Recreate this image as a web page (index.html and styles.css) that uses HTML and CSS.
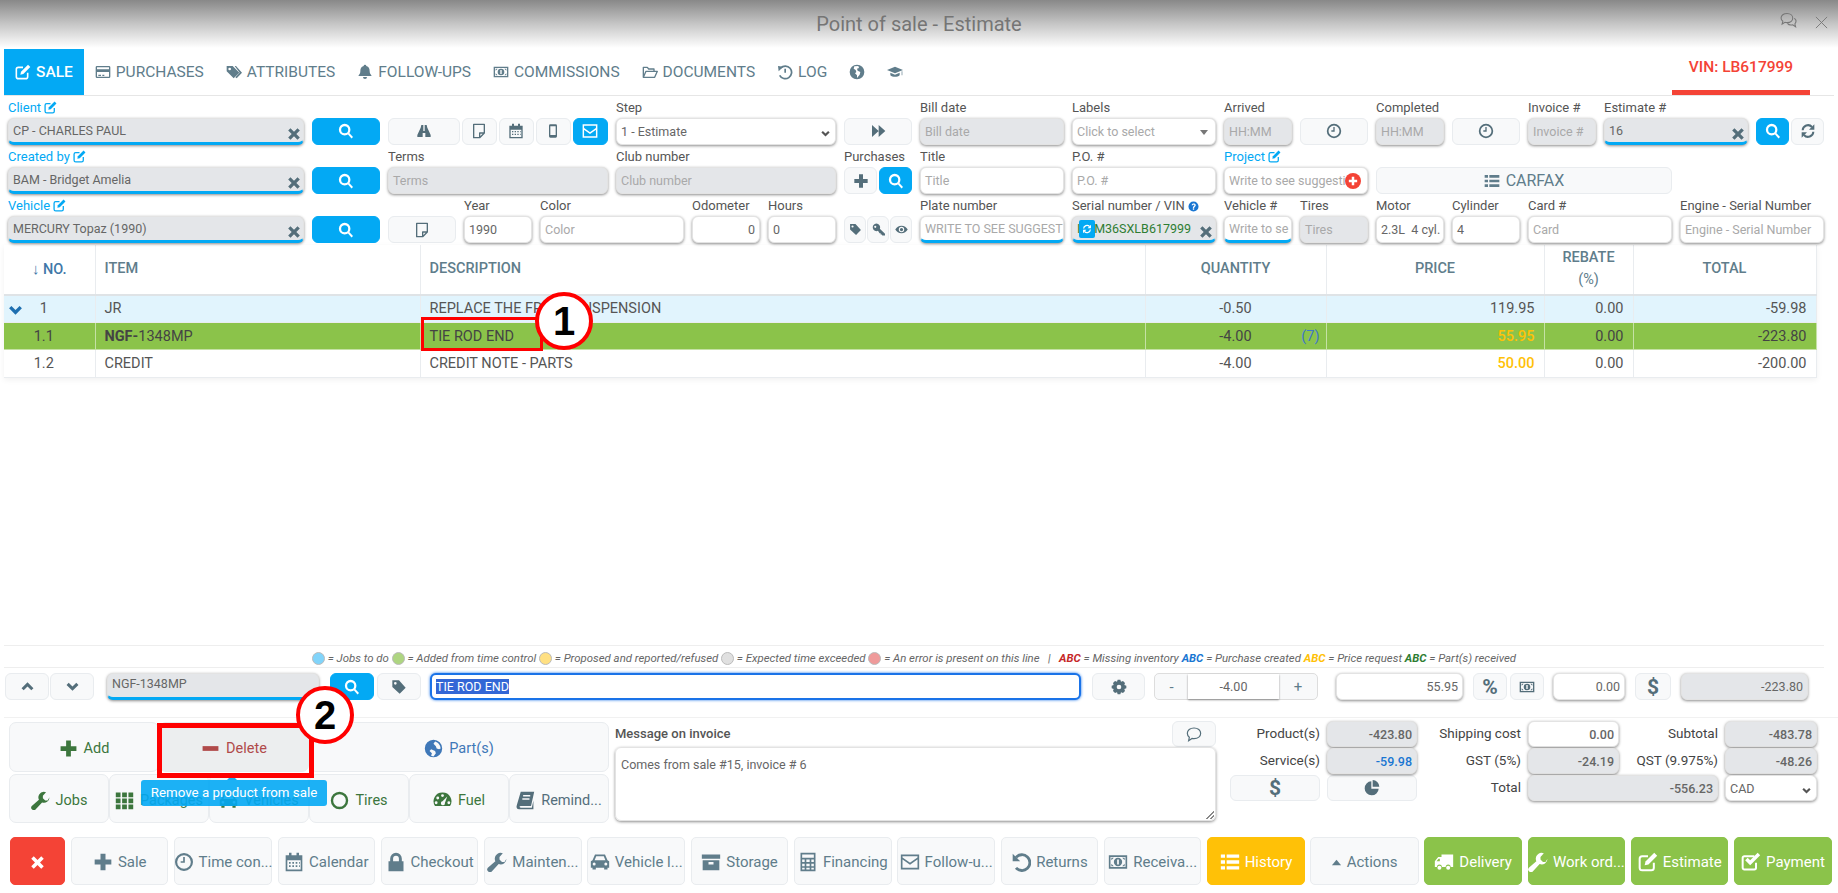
FILE: index.html
```html
<!DOCTYPE html>
<html lang="en">
<head>
  <meta charset="UTF-8" />
  <meta name="viewport" content="width=device-width, initial-scale=1.0" />
  <title>Point of sale - Estimate</title>
  <link rel="stylesheet" href="styles.css">
</head>
<body>
  <!-- icon sprite -->
  <svg class="sprite" xmlns="http://www.w3.org/2000/svg">
    <symbol id="i-edit" viewBox="0 0 24 24"><path d="M19 13v6a3 3 0 0 1-3 3H5a3 3 0 0 1-3-3V8a3 3 0 0 1 3-3h7" fill="none" stroke="currentColor" stroke-width="2.4"/><path d="M8 16l1-4.500L19.500 1 23 4.500 12.500 15z"/></symbol>
    <symbol id="i-card" viewBox="0 0 24 24"><path d="M3 3h18a2 2 0 0 1 2 2v14a2 2 0 0 1-2 2H3a2 2 0 0 1-2-2V5a2 2 0 0 1 2-2zm0 2v3h18V5zm0 7v7h18v-7zm2 4h4v2H5zm6 0h3v2h-3z" fill-rule="evenodd"/></symbol>
    <symbol id="i-tags" viewBox="0 0 24 24"><path d="M1 3h9l10 10-8.500 8.500L1 11zm4.500 2.500a2 2 0 1 0 0 4 2 2 0 0 0 0-4z" fill-rule="evenodd"/><path d="M13 3h2l9 10-8 8.500-2-1.500 6.500-7z"/></symbol>
    <symbol id="i-bell" viewBox="0 0 24 24"><path d="M12 1a2 2 0 0 1 2 2c4 1 5 4 5 8 0 4 2 5 3 7H2c1-2 3-3 3-7 0-4 1-7 5-8a2 2 0 0 1 2-2zM9 19.500h6a3 3 0 0 1-6 0z"/></symbol>
    <symbol id="i-money" viewBox="0 0 24 24"><path d="M1 4h22v16H1zm2 2v12h18V6zm9 1a5 5 0 1 1 0 10 5 5 0 0 1 0-10zm-8 0h3L4 10zm16 0v3l-3-3zM4 14l3 3H4zm16 3h-3l3-3z" fill-rule="evenodd"/><path d="M11 9h2v6h-2z" fill="#fff"/></symbol>
    <symbol id="i-folder" viewBox="0 0 24 24"><path d="M2 20V5h6l2 2.500h8V11M2 20l4-9h17l-4 9z" fill="none" stroke="currentColor" stroke-width="2" stroke-linejoin="round"/></symbol>
    <symbol id="i-history" viewBox="0 0 24 24"><path d="M5.500 6A9.500 9.500 0 1 1 4 17" fill="none" stroke="currentColor" stroke-width="2.600"/><path d="M1.500 3l8 1-7 7zM11 7h2.500v6H11z"/></symbol>
    <symbol id="i-globe" viewBox="0 0 24 24"><path d="M12 1a11 11 0 1 1 0 22 11 11 0 0 1 0-22zM8 3.500L7 7l3 2 1 3-2 2 3 3v4l4-5 1-4-4-2-1-3 3-1-1-3z" fill-rule="evenodd"/></symbol>
    <symbol id="i-cap" viewBox="0 0 24 24"><path d="M12 4L0 9l12 5 12-5zM5 13v4c3 3 11 3 14 0v-4l-7 3zM22 11v6h1v-6z"/></symbol>
    <symbol id="i-search" viewBox="0 0 24 24"><circle cx="10" cy="10" r="7" fill="none" stroke="currentColor" stroke-width="3.400"/><path d="M14.500 16.500l2-2 6 6.500-2.200 2.200z"/></symbol>
    <symbol id="i-binoculars" viewBox="0 0 24 24"><path d="M8 3h3v9h2V3h3l1 4 5 11v3H14v-6h-4v6H2v-3L7 7z"/></symbol>
    <symbol id="i-note" viewBox="0 0 24 24"><path d="M4 2h16v13l-7 7H4zM13 22v-7h7" fill="none" stroke="currentColor" stroke-width="2" stroke-linejoin="round"/></symbol>
    <symbol id="i-calendar" viewBox="0 0 24 24"><path d="M2 4h4V1h3v3h6V1h3v3h4v19H2zm2 6v11h16V10zm2 2h2v2H6zm4 0h2v2h-2zm4 0h2v2h-2zm4 0h1v2h-1zM6 16h2v2H6zm4 0h2v2h-2zm4 0h2v2h-2zm4 0h1v2h-1z" fill-rule="evenodd"/></symbol>
    <symbol id="i-mobile" viewBox="0 0 24 24"><path d="M8 2h8a2 2 0 0 1 2 2v16a2 2 0 0 1-2 2H8a2 2 0 0 1-2-2V4a2 2 0 0 1 2-2zm0 3v13h8V5z" fill-rule="evenodd"/></symbol>
    <symbol id="i-lock" viewBox="0 0 24 24"><path d="M12 1a7 7 0 0 1 7 7v3h2v12H3V11h2V8a7 7 0 0 1 7-7zm0 3.500A3.500 3.500 0 0 0 8.500 8v3h7V8A3.500 3.500 0 0 0 12 4.500z" fill-rule="evenodd"/></symbol>
    <symbol id="i-mailcheck" viewBox="0 0 24 24"><path d="M2 3h20v18H2zM2 8l10 7 10-7" fill="none" stroke="currentColor" stroke-width="2.200"/></symbol>
    <symbol id="i-forward" viewBox="0 0 24 24"><path d="M3 3l10 9-10 9zM13 3l10 9-10 9z"/></symbol>
    <symbol id="i-clock" viewBox="0 0 24 24"><circle cx="12" cy="12" r="9.500" fill="none" stroke="currentColor" stroke-width="2.600"/><path d="M11 6h2v7H8v-2h3z"/></symbol>
    <symbol id="i-times" viewBox="0 0 24 24"><path d="M6 2l6 6 6-6 4 4-6 6 6 6-4 4-6-6-6 6-4-4 6-6-6-6z"/></symbol>
    <symbol id="i-refresh" viewBox="0 0 24 24"><path d="M4 11a8 8 0 0 1 14-5M20 13a8 8 0 0 1-14 5" fill="none" stroke="currentColor" stroke-width="3"/><path d="M21.500 2v8h-8zM2.500 22v-8h8z"/></symbol>
    <symbol id="i-plus" viewBox="0 0 24 24"><path d="M9 2h6v7h7v6h-7v7H9v-7H2V9h7z"/></symbol>
    <symbol id="i-minus" viewBox="0 0 24 24"><path d="M2 9h20v6H2z"/></symbol>
    <symbol id="i-tag" viewBox="0 0 24 24"><path d="M2 2h10l10 11-9 9L2 12zm4.500 2.500a2 2 0 1 0 0 4 2 2 0 0 0 0-4z" fill-rule="evenodd"/></symbol>
    <symbol id="i-key" viewBox="0 0 24 24"><path d="M8 1a7 7 0 0 1 6.500 9.500L24 20v3h-5l-1-2h-2v-2h-2l-3-4.500A7 7 0 1 1 8 1zM6 5a2 2 0 1 0 0 4 2 2 0 0 0 0-4z" fill-rule="evenodd"/></symbol>
    <symbol id="i-eye" viewBox="0 0 24 24"><path d="M12 5c5 0 9 3 11.500 7-2.500 4-6.500 7-11.500 7S3 16 .5 12C3 8 7 5 12 5zm0 2a5 5 0 1 0 0 10 5 5 0 0 0 0-10zm0 2a3 3 0 1 1 0 6 3 3 0 0 1 0-6z" fill-rule="evenodd"/></symbol>
    <symbol id="i-list" viewBox="0 0 24 24"><path d="M1 3h5v4H1zm7 0h15v4H8zM1 10h5v4H1zm7 0h15v4H8zM1 17h5v4H1zm7 0h15v4H8z"/></symbol>
    <symbol id="i-question" viewBox="0 0 24 24"><path d="M12 1a11 11 0 1 1 0 22 11 11 0 0 1 0-22zm-1.500 15v3h3v-3zM8 9h3c0-2 3-2 3 0 0 1.500-3.500 2-3.500 6h3c0-2.500 3.500-3 3.500-6 0-5-9-5-9 0z" fill-rule="evenodd"/></symbol>
    <symbol id="i-down" viewBox="0 0 24 24"><path d="M1 9l4-4 7 7 7-7 4 4-11 11z"/></symbol>
    <symbol id="i-up" viewBox="0 0 24 24"><path d="M1 15l4 4 7-7 7 7 4-4L12 4z"/></symbol>
    <symbol id="i-gear" viewBox="0 0 24 24"><path d="M10 1h4l1 3 3-1 3 3-1 3 3 1v4l-3 1 1 3-3 3-3-1-1 3h-4l-1-3-3 1-3-3 1-3-3-1v-4l3-1-1-3 3-3 3 1zm2 7.500a3.500 3.500 0 1 0 0 7 3.500 3.500 0 0 0 0-7z" fill-rule="evenodd"/></symbol>
    <symbol id="i-globe2" viewBox="0 0 24 24"><path d="M12 1a11 11 0 1 1 0 22 11 11 0 0 1 0-22zm2 2l-2 3 3 3 1 3 3 1 2-1c0-4-3-8-7-9zM9 13l-2 2 3 3-1 3 3 1 3-4-1-3z" fill-rule="evenodd"/></symbol>
    <symbol id="i-wrench" viewBox="0 0 24 24"><path d="M16 1a7 7 0 0 1 3 .6L15 6v3l3 3 3 0 2.400-4A7 7 0 0 1 14 14.500L6 23a3 3 0 0 1-5-4l9-8A7 7 0 0 1 16 1z"/></symbol>
    <symbol id="i-th" viewBox="0 0 24 24"><path d="M1 2h6v6H1zm8 0h6v6H9zm8 0h6v6h-6zM1 9.500h6v6H1zm8 0h6v6H9zm8 0h6v6h-6zM1 17h6v6H1zm8 0h6v6H9zm8 0h6v6h-6z"/></symbol>
    <symbol id="i-car" viewBox="0 0 24 24"><path d="M6 3h12l3 7 2 1v8h-2v2h-4v-2H7v2H3v-2H1v-8l2-1zm1.500 2L5.500 10h13L16.500 5zM5 12.500a1.800 1.800 0 1 0 0 3.600 1.800 1.800 0 0 0 0-3.600zm14 0a1.800 1.800 0 1 0 0 3.600 1.800 1.800 0 0 0 0-3.600z" fill-rule="evenodd"/></symbol>
    <symbol id="i-ring" viewBox="0 0 24 24"><circle cx="12" cy="12" r="9.500" fill="none" stroke="currentColor" stroke-width="3"/></symbol>
    <symbol id="i-gauge" viewBox="0 0 24 24"><path d="M12 2a11 11 0 0 1 9.500 17H2.500A11 11 0 0 1 12 2zm0 2a1.800 1.800 0 1 0 0 3.600A1.800 1.800 0 0 0 12 4zM6 7a1.800 1.800 0 1 0 0 3.600A1.800 1.800 0 0 0 6 7zm-2 6a1.800 1.800 0 1 0 0 3.600A1.800 1.800 0 0 0 4 13zm16 0a1.800 1.800 0 1 0 0 3.600 1.800 1.800 0 0 0 0-3.600zM18 7l-6 6a2.500 2.500 0 1 0 3 2z" fill-rule="evenodd"/></symbol>
    <symbol id="i-book" viewBox="0 0 24 24"><path d="M6 1h17l-4 18H6c-2 0-2 2 0 2h14l2-9v11H4c-3 0-4-2-3-5zm3 4v2h9V5zm-1 4v2h9V9z" fill-rule="evenodd"/></symbol>
    <symbol id="i-archive" viewBox="0 0 24 24"><path d="M1 3h22v5H1zM2 10h20v12H2zm7 2v3h6v-3z" fill-rule="evenodd"/></symbol>
    <symbol id="i-calc" viewBox="0 0 24 24"><path d="M3 1h18v22H3zm2 2v4h14V3zm0 6v3h3V9zm5 0v3h4V9zm6 0v3h3V9zM5 14v3h3v-3zm5 0v3h4v-3zm6 0v3h3v-3zM5 19v2h3v-2zm5 0v2h4v-2zm6 0v2h3v-2z" fill-rule="evenodd"/></symbol>
    <symbol id="i-mail" viewBox="0 0 24 24"><path d="M2 4h20v16H2zM2 7l10 7 10-7" fill="none" stroke="currentColor" stroke-width="2"/></symbol>
    <symbol id="i-undo" viewBox="0 0 24 24"><path d="M6 6.500A9.500 9.500 0 1 1 6 19" fill="none" stroke="currentColor" stroke-width="3.400"/><path d="M2 2v9h9z"/></symbol>
    <symbol id="i-caret" viewBox="0 0 24 24"><path d="M12 6l10 12H2z"/></symbol>
    <symbol id="i-truck" viewBox="0 0 24 24"><path d="M9 3h14v15h-3a3 3 0 0 0-6 0H9.500a3 3 0 0 0-6 0H1v-7l4-5h4zM7 8H5.500L3 11h4z" fill-rule="evenodd"/><circle cx="6.500" cy="19" r="2.400"/><circle cx="17" cy="19" r="2.400"/></symbol>
    <symbol id="i-check" viewBox="0 0 24 24"><path d="M18 13v6a2 2 0 0 1-2 2H4a2 2 0 0 1-2-2V7a2 2 0 0 1 2-2h12" fill="none" stroke="currentColor" stroke-width="2.400"/><path d="M5 10l3-3 3 3 9-9 3 3-12 12z"/></symbol>
    <symbol id="i-comment" viewBox="0 0 24 24"><path d="M12 3c6 0 10 3.500 10 8s-4 8-10 8c-1 0-2 0-3-.4L4 22l1-5c-2-1.500-3-3.500-3-6 0-4.500 4-8 10-8z" fill="none" stroke="currentColor" stroke-width="1.800"/></symbol>
    <symbol id="i-pie" viewBox="0 0 24 24"><path d="M11 2v11h11A10.500 10.500 0 1 1 11 2zM13 0a10.500 10.500 0 0 1 10 10H13z"/></symbol>
    <symbol id="i-comments" viewBox="0 0 24 24"><path d="M10 2c5 0 8 3 8 6.500S15 15 10 15c-1 0-2 0-3-.4L3 17l1-4c-1.500-1-2.500-2.700-2.500-4.500C1.500 5 5 2 10 2z" fill="none" stroke="currentColor" stroke-width="1.500"/><path d="M20 9c2 1 3 3 2.500 5-.2 1.200-1 2-1.500 2.800l1 4-4-2.800c-3 .8-6 0-7.500-2" fill="none" stroke="currentColor" stroke-width="1.500"/></symbol>
    <symbol id="i-close" viewBox="0 0 24 24"><path d="M3 3l18 18M21 3L3 21" fill="none" stroke="currentColor" stroke-width="1.500"/></symbol>
  </svg>

  <div class="page">
    <header class="topbar">
      <span class="topbar-title">Point of sale - Estimate</span>
      <div class="topbar-icons">
        <svg class="ico-chat"><use href="#i-comments"/></svg>
        <svg class="ico-close"><use href="#i-close"/></svg>
      </div>
    </header>

    <nav class="tabs">
      <a class="tab active"><svg class="ico"><use href="#i-edit"/></svg>SALE</a>
      <a class="tab"><svg class="ico"><use href="#i-card"/></svg>PURCHASES</a>
      <a class="tab"><svg class="ico"><use href="#i-tags"/></svg>ATTRIBUTES</a>
      <a class="tab"><svg class="ico"><use href="#i-bell"/></svg>FOLLOW-UPS</a>
      <a class="tab"><svg class="ico"><use href="#i-money"/></svg>COMMISSIONS</a>
      <a class="tab"><svg class="ico"><use href="#i-folder"/></svg>DOCUMENTS</a>
      <a class="tab"><svg class="ico"><use href="#i-history"/></svg>LOG</a>
      <a class="tab"><svg class="ico"><use href="#i-globe"/></svg></a>
      <a class="tab"><svg class="ico"><use href="#i-cap"/></svg></a>
      <a class="tab tab-vin">VIN: LB617999</a>
    </nav>

    <section class="form-grid">
      <!-- row 1 -->
      <div class="cell s4"><label class="link">Client <svg class="ico-sm"><use href="#i-edit"/></svg></label>
        <div class="field off under">CP - CHARLES PAUL<svg class="clear"><use href="#i-times"/></svg></div></div>
      <div class="cell s1"><label></label><button class="btn primary"><svg class="ico"><use href="#i-search"/></svg></button></div>
      <div class="cell s3"><label></label>
        <div class="btn-row">
          <button class="btn w2"><svg class="ico"><use href="#i-binoculars"/></svg></button>
          <button class="btn"><svg class="ico"><use href="#i-note"/></svg></button>
          <button class="btn"><svg class="ico"><use href="#i-calendar"/></svg></button>
          <button class="btn"><svg class="ico"><use href="#i-mobile"/></svg></button>
          <button class="btn primary"><svg class="ico"><use href="#i-mailcheck"/></svg></button>
        </div></div>
      <div class="cell s3"><label>Step</label><div class="field">1 - Estimate<svg class="chev"><use href="#i-down"/></svg></div></div>
      <div class="cell s1"><label></label><button class="btn"><svg class="ico"><use href="#i-forward"/></svg></button></div>
      <div class="cell s2"><label>Bill date</label><div class="field off ph">Bill date</div></div>
      <div class="cell s2"><label>Labels</label><div class="field ph">Click to select<span class="caret-down"></span></div></div>
      <div class="cell s1"><label>Arrived</label><div class="field off ph">HH:MM</div></div>
      <div class="cell s1"><label></label><button class="btn"><svg class="ico"><use href="#i-clock"/></svg></button></div>
      <div class="cell s1"><label>Completed</label><div class="field off ph">HH:MM</div></div>
      <div class="cell s1"><label></label><button class="btn"><svg class="ico"><use href="#i-clock"/></svg></button></div>
      <div class="cell s1"><label>Invoice #</label><div class="field off ph">Invoice #</div></div>
      <div class="cell s2"><label>Estimate #</label><div class="field off under">16<svg class="clear"><use href="#i-times"/></svg></div></div>
      <div class="cell s1"><label></label><div class="btn-row">
          <button class="btn primary"><svg class="ico"><use href="#i-search"/></svg></button>
          <button class="btn"><svg class="ico"><use href="#i-refresh"/></svg></button>
        </div></div>

      <!-- row 2 -->
      <div class="cell s4"><label class="link">Created by <svg class="ico-sm"><use href="#i-edit"/></svg></label>
        <div class="field off under">BAM - Bridget Amelia<svg class="clear"><use href="#i-times"/></svg></div></div>
      <div class="cell s1"><label></label><button class="btn primary"><svg class="ico"><use href="#i-search"/></svg></button></div>
      <div class="cell s3"><label>Terms</label><div class="field off ph">Terms</div></div>
      <div class="cell s3"><label>Club number</label><div class="field off ph">Club number</div></div>
      <div class="cell s1"><label>Purchases</label><div class="btn-row">
          <button class="btn"><svg class="ico"><use href="#i-plus"/></svg></button>
          <button class="btn primary"><svg class="ico"><use href="#i-search"/></svg></button>
        </div></div>
      <div class="cell s2"><label>Title</label><div class="field ph">Title</div></div>
      <div class="cell s2"><label>P.O. #</label><div class="field ph">P.O. #</div></div>
      <div class="cell s2"><label class="link">Project <svg class="ico-sm"><use href="#i-edit"/></svg></label>
        <div class="field ph">Write to see suggesti<span class="add-badge"><svg><use href="#i-plus"/></svg></span></div></div>
      <div class="cell s4"><label></label><button class="btn btn-text"><svg class="ico"><use href="#i-list"/></svg>CARFAX</button></div>
      <div class="cell s2"></div>

      <!-- row 3 -->
      <div class="cell s4"><label class="link">Vehicle <svg class="ico-sm"><use href="#i-edit"/></svg></label>
        <div class="field off under">MERCURY Topaz (1990)<svg class="clear"><use href="#i-times"/></svg></div></div>
      <div class="cell s1"><label></label><button class="btn primary"><svg class="ico"><use href="#i-search"/></svg></button></div>
      <div class="cell s1"><label></label><button class="btn"><svg class="ico"><use href="#i-note"/></svg></button></div>
      <div class="cell s1"><label>Year</label><div class="field">1990</div></div>
      <div class="cell s2"><label>Color</label><div class="field ph">Color</div></div>
      <div class="cell s1"><label>Odometer</label><div class="field right">0</div></div>
      <div class="cell s1"><label>Hours</label><div class="field">0</div></div>
      <div class="cell s1"><label></label><div class="btn-row tight">
          <button class="btn"><svg class="ico-sm"><use href="#i-tag"/></svg></button>
          <button class="btn"><svg class="ico-sm"><use href="#i-key"/></svg></button>
          <button class="btn"><svg class="ico-sm"><use href="#i-eye"/></svg></button>
        </div></div>
      <div class="cell s2"><label>Plate number</label><div class="field ph under">WRITE TO SEE SUGGEST</div></div>
      <div class="cell s2"><label>Serial number / VIN <svg class="ico-sm help"><use href="#i-question"/></svg></label>
        <div class="field off under vin">IL<span class="vin-btn"><svg><use href="#i-refresh"/></svg></span>M36SXLB617999<svg class="clear"><use href="#i-times"/></svg></div></div>
      <div class="cell s1"><label>Vehicle #</label><div class="field ph under">Write to se</div></div>
      <div class="cell s1"><label>Tires</label><div class="field off ph">Tires</div></div>
      <div class="cell s1"><label>Motor</label><div class="field">2.3L&nbsp; 4 cyl.</div></div>
      <div class="cell s1"><label>Cylinder</label><div class="field">4</div></div>
      <div class="cell s2"><label>Card #</label><div class="field ph">Card</div></div>
      <div class="cell s2"><label>Engine - Serial Number</label><div class="field ph">Engine - Serial Number</div></div>
    </section>

    <table class="lines">
      <colgroup>
        <col class="col-no"><col class="col-item"><col class="col-desc"><col class="col-qty"><col class="col-price"><col class="col-rebate"><col class="col-total">
      </colgroup>
      <thead>
        <tr>
          <th class="th-no"><span class="sort">↓</span> NO.</th>
          <th class="left">ITEM</th>
          <th class="left">DESCRIPTION</th>
          <th>QUANTITY</th>
          <th>PRICE</th>
          <th>REBATE<br><span class="th-sub">(%)</span></th>
          <th>TOTAL</th>
        </tr>
      </thead>
      <tbody>
        <tr class="row-blue">
          <td class="no"><svg class="row-chev"><use href="#i-down"/></svg>1</td>
          <td>JR</td>
          <td>REPLACE THE FRONT SUSPENSION</td>
          <td class="qty">-0.50</td>
          <td class="num">119.95</td>
          <td class="num">0.00</td>
          <td class="num">-59.98</td>
        </tr>
        <tr class="row-green">
          <td class="no">1.1</td>
          <td><b>NGF-</b>1348MP</td>
          <td>TIE ROD END</td>
          <td class="qty">-4.00<span class="stock">(7)</span></td>
          <td class="num amber">55.95</td>
          <td class="num">0.00</td>
          <td class="num">-223.80</td>
        </tr>
        <tr>
          <td class="no">1.2</td>
          <td>CREDIT</td>
          <td>CREDIT NOTE - PARTS</td>
          <td class="qty">-4.00</td>
          <td class="num amber">50.00</td>
          <td class="num">0.00</td>
          <td class="num">-200.00</td>
        </tr>
      </tbody>
    </table>

    <div class="spacer"></div>

    <div class="legend">
      <i class="dot d-blue"></i> = Jobs to do <i class="dot d-green"></i> = Added from time control <i class="dot d-yellow"></i> = Proposed and reported/refused <i class="dot d-grey"></i> = Expected time exceeded <i class="dot d-red"></i> = An error is present on this line &nbsp; | &nbsp; <b class="t-red">ABC</b> = Missing inventory <b class="t-blue">ABC</b> = Purchase created <b class="t-yellow">ABC</b> = Price request <b class="t-green">ABC</b> = Part(s) received
    </div>

    <div class="edit-row">
      <button class="btn e-arrow"><svg class="ico"><use href="#i-up"/></svg></button>
      <button class="btn e-arrow"><svg class="ico"><use href="#i-down"/></svg></button>
      <div class="field off under e-item">NGF-1348MP</div>
      <button class="btn primary e-search"><svg class="ico"><use href="#i-search"/></svg></button>
      <button class="btn e-tag"><svg class="ico"><use href="#i-tag"/></svg></button>
      <div class="field e-desc"><span class="selected">TIE ROD END</span></div>
      <button class="btn e-gear"><svg class="ico"><use href="#i-gear"/></svg></button>
      <div class="stepper">
        <span class="step-btn">-</span>
        <span class="step-val">-4.00</span>
        <span class="step-btn plus">+</span>
      </div>
      <div class="field right e-price">55.95</div>
      <button class="btn e-small big-glyph">%</button>
      <button class="btn e-small"><svg class="ico"><use href="#i-money"/></svg></button>
      <div class="field right e-rebate">0.00</div>
      <button class="btn e-small big-glyph">$</button>
      <div class="field off right e-total">-223.80</div>
    </div>

    <div class="lower">
      <div class="actions">
        <button class="btn act s3 green-t"><svg class="ico"><use href="#i-plus"/></svg>Add</button>
        <button class="btn act s3 red-t pressed"><svg class="ico"><use href="#i-minus"/></svg>Delete</button>
        <button class="btn act s6 blue-t"><svg class="ico"><use href="#i-globe2"/></svg>Part(s)</button>
        <button class="btn act s2 green-t"><svg class="ico"><use href="#i-wrench"/></svg>Jobs</button>
        <button class="btn act s2 green-t"><svg class="ico"><use href="#i-th"/></svg>Packages</button>
        <button class="btn act s2 green-t"><svg class="ico"><use href="#i-car"/></svg>Vehicles</button>
        <button class="btn act s2 green-t"><svg class="ico"><use href="#i-ring"/></svg>Tires</button>
        <button class="btn act s2 green-t"><svg class="ico"><use href="#i-gauge"/></svg>Fuel</button>
        <button class="btn act s2"><svg class="ico"><use href="#i-book"/></svg>Remind...</button>
      </div>

      <div class="message">
        <div class="message-head">
          <label>Message on invoice</label>
          <button class="btn msg-btn"><svg class="ico"><use href="#i-comment"/></svg></button>
        </div>
        <div class="message-box">Comes from sale #15, invoice # 6</div>
      </div>

      <div class="totals">
        <label>Product(s)</label><div class="field off right">-423.80</div>
        <label>Shipping cost</label><div class="field right">0.00</div>
        <label>Subtotal</label><div class="field off right">-483.78</div>
        <label>Service(s)</label><div class="field off right val-blue">-59.98</div>
        <label>GST (5%)</label><div class="field off right">-24.19</div>
        <label>QST (9.975%)</label><div class="field off right">-48.26</div>
        <button class="btn big-glyph">$</button><button class="btn"><svg class="ico"><use href="#i-pie"/></svg></button>
        <label>Total</label><div class="field off right total-val">-556.23</div>
        <div class="field currency">CAD<svg class="chev"><use href="#i-down"/></svg></div>
      </div>
    </div>

    <footer class="bottom-bar">
      <button class="btn danger"><svg class="ico-x"><use href="#i-times"/></svg></button>
      <button class="btn bar"><svg><use href="#i-plus"/></svg>Sale</button>
      <button class="btn bar"><svg><use href="#i-clock"/></svg>Time con...</button>
      <button class="btn bar"><svg><use href="#i-calendar"/></svg>Calendar</button>
      <button class="btn bar"><svg><use href="#i-lock"/></svg>Checkout</button>
      <button class="btn bar"><svg><use href="#i-wrench"/></svg>Mainten...</button>
      <button class="btn bar"><svg><use href="#i-car"/></svg>Vehicle l...</button>
      <button class="btn bar"><svg><use href="#i-archive"/></svg>Storage</button>
      <button class="btn bar"><svg><use href="#i-calc"/></svg>Financing</button>
      <button class="btn bar"><svg><use href="#i-mail"/></svg>Follow-u...</button>
      <button class="btn bar"><svg><use href="#i-undo"/></svg>Returns</button>
      <button class="btn bar"><svg><use href="#i-money"/></svg>Receiva...</button>
      <button class="btn bar amber-bg"><svg><use href="#i-list"/></svg>History</button>
      <button class="btn bar wide"><svg class="small"><use href="#i-caret"/></svg>Actions</button>
      <button class="btn bar green-bg"><svg><use href="#i-truck"/></svg>Delivery</button>
      <button class="btn bar green-bg"><svg><use href="#i-wrench"/></svg>Work ord...</button>
      <button class="btn bar green-bg"><svg><use href="#i-edit"/></svg>Estimate</button>
      <button class="btn bar green-bg"><svg><use href="#i-check"/></svg>Payment</button>
    </footer>

    <!-- annotations and tooltip sit over the page -->
    <div class="tooltip">Remove a product from sale</div>
    <div class="mark mark-rect-1"></div>
    <div class="mark mark-circle mark-circle-1">1</div>
    <div class="mark mark-rect-2"></div>
    <div class="mark mark-circle mark-circle-2">2</div>
  </div>
</body>
</html>
```

FILE: styles.css
```css
* { box-sizing: border-box; }
html, body { margin: 0; padding: 0; }
body {
  font-family: Roboto, "Liberation Sans", sans-serif;
  font-size: 13px;
  color: #555;
  background: #fff;
  overflow: hidden;
}
.sprite { display: none; }
svg { fill: currentColor; flex-shrink: 0; }

.page {
  position: relative;
  height: 893px;
  display: flex;
  flex-direction: column;
}

/* top window bar */
.topbar {
  height: 48px;
  flex-shrink: 0;
  display: flex;
  align-items: center;
  justify-content: center;
  background: linear-gradient(#888 0%, #c6c6c6 50%, #fff 100%);
}
.topbar-title { font-size: 20px; color: #757575; }
.topbar-icons {
  position: absolute;
  top: 12px;
  right: 9px;
  display: flex;
  gap: 14px;
  color: #777;
}
.ico-chat { width: 23px; height: 17px; }
.ico-close { width: 15px; height: 15px; margin-top: 3px; }

/* tabs */
.tabs {
  height: 46.500px;
  margin: 1px 4px 0 4px;
  flex-shrink: 0;
  display: flex;
  border-bottom: 1px solid #e6e6e6;
  font-size: 15.500px;
}
.tab {
  display: flex;
  align-items: center;
  gap: 5px;
  padding: 0 11px;
  color: #607d8b;
}
.tab.active { background: #03a9f4; color: #fff; font-weight: 500; }
.tab .ico { width: 16px; height: 16px; }
.tab-vin {
  margin-left: auto;
  margin-right: 24px;
  width: 138px;
  justify-content: center;
  color: #f44336;
  font-weight: 500;
  padding-bottom: 4px;
  border-bottom: 5px solid #f44336;
}

/* header form: 24 columns of 76px */
.form-grid {
  display: grid;
  grid-template-columns: repeat(24, 76px);
  grid-auto-rows: 49.300px;
  margin-left: 4px;
  flex-shrink: 0;
}
.cell {
  padding: 0 4px;
  min-width: 0;
  display: flex;
  flex-direction: column;
  justify-content: flex-end;
}
.s1 { grid-column: span 1; }
.s2 { grid-column: span 2; }
.s3 { grid-column: span 3; }
.s4 { grid-column: span 4; }
.s6 { grid-column: span 6; }
label { display: block; height: 20px; line-height: 20px; font-size: 13px; color: #555; white-space: nowrap; }
label.link { color: #03a9f4; }
.ico-sm { width: 13px; height: 13px; vertical-align: -2px; }
.help { color: #1976d2; width: 11px; height: 11px; }

.field {
  position: relative;
  height: 27px;
  display: flex;
  align-items: center;
  padding: 0 4px;
  background: #fff;
  border: 1px solid #e3e3e3;
  border-radius: 6px;
  box-shadow: 0 1px 3px rgba(0, 0, 0, .45);
  font-size: 12.500px;
  color: #666;
  white-space: nowrap;
  overflow: hidden;
}
.field.off { background: #e4e6e9; }
.field.ph { color: #a9a9a9; }
.field.under { border-bottom: 3px solid #03a9f4; }
.field.right { justify-content: flex-end; }
.clear { position: absolute; right: 2px; top: 8px; width: 14px; height: 14px; color: #546e7a; }
.chev { position: absolute; right: 5px; top: 10px; width: 9px; height: 9px; color: #555; }
.caret-down {
  position: absolute;
  right: 7px;
  top: 11px;
  border: 4px solid transparent;
  border-top: 5px solid #777;
  border-bottom: 0;
}
.add-badge {
  position: absolute;
  right: 6px;
  top: 5px;
  width: 16px;
  height: 16px;
  border-radius: 50%;
  background: #f44336;
  color: #fff;
  display: flex;
  align-items: center;
  justify-content: center;
}
.add-badge svg { width: 10px; height: 10px; }
.vin { color: #2e7d32; }
.vin-btn {
  width: 16px;
  height: 18px;
  margin: 0 -1px 0 -8px;
  background: #03a9f4;
  border-radius: 2px;
  color: #fff;
  display: flex;
  align-items: center;
  justify-content: center;
}
.vin-btn svg { width: 10px; height: 10px; }

.btn {
  height: 27px;
  width: 100%;
  padding: 0;
  display: flex;
  align-items: center;
  justify-content: center;
  gap: 6px;
  background: #f8f9fa;
  border: 1px solid #e9ecef;
  border-radius: 6px;
  color: #546e7a;
  font: inherit;
  white-space: nowrap;
  min-width: 0;
}
.btn.primary { background: #03a9f4; border-color: #03a9f4; color: #fff; }
.ico { width: 16px; height: 16px; }
.btn-row { display: flex; gap: 2px; }
.btn-row .btn { flex: 1 1 0; }
.btn-row .w2 { flex-grow: 2.100; }
.btn-row.tight { gap: 1px; }
.btn-text { font-size: 16px; color: #607d8b; }

/* line table */
.lines {
  width: 1812px;
  margin: 1.500px 0 0 4px;
  table-layout: fixed;
  border-collapse: collapse;
  box-shadow: 0 2px 6px rgba(0, 0, 0, .06);
  flex-shrink: 0;
  font-size: 14.500px;
}
.col-no { width: 91px; }
.col-item { width: 325px; }
.col-desc { width: 725px; }
.col-qty { width: 181px; }
.col-price { width: 218px; }
.col-rebate { width: 89px; }
.col-total { width: 183px; }
.lines th {
  height: 50px;
  font-weight: 500;
  font-size: 14.500px;
  color: #607d8b;
  text-align: center;
  line-height: 22px;
  padding: 0 9px;
  border-right: 1px solid #e9ecef;
  border-bottom: 2px solid #dfe3e6;
}
.lines th.left { text-align: left; }
.th-no { padding-left: 20px; color: #3f78a8 !important; }
.sort { font-weight: 400; font-size: 15px; }
.th-sub { font-weight: 400; }
.lines td {
  height: 27.500px;
  padding: 0 9px;
  border-right: 1px solid #e9ecef;
  border-bottom: 1px solid #e9ecef;
  color: #555;
  white-space: nowrap;
}
.lines td.no { position: relative; text-align: center; padding: 0 30px 0 19px; }
.lines td.qty { position: relative; text-align: center; }
.lines td.num { text-align: right; }
.lines td.amber { color: #ffc107; font-weight: 500; }
.row-chev { position: absolute; left: 3px; top: 7px; width: 17px; height: 14px; color: #1e6fb0; }
.row-blue td { background: #e1f4fd; }
.row-green td { background: #8bc34a; border-color: #c5e1a5; color: #444; }
.stock { position: absolute; right: 6px; color: #3f78c8; }

.spacer { flex: 1; }

.legend {
  height: 23px;
  line-height: 25px;
  margin: 0 14px 0 4px;
  text-align: center;
  font-size: 11.400px;
  font-style: italic;
  color: #666;
  border-top: 1px solid #eee;
  border-bottom: 1px solid #eee;
  white-space: nowrap;
  flex-shrink: 0;
}
.dot { display: inline-block; vertical-align: -3px; width: 13px; height: 13px; border-radius: 50%; border: 1px solid #bbb; }
.d-blue { background: #81d4fa; }
.d-green { background: #aed581; }
.d-yellow { background: #ffe082; }
.d-grey { background: #e0e0e0; }
.d-red { background: #ef9a9a; }
.t-red { color: #c62828; }
.t-blue { color: #1976d2; }
.t-yellow { color: #ffc107; }
.t-green { color: #2e7d32; }

/* edit line */
.edit-row {
  height: 27px;
  margin-top: 5px;
  padding-left: 5px;
  display: flex;
  flex-shrink: 0;
}
.edit-row .btn, .edit-row .field { flex: none; }
.e-arrow { width: 44px; margin-right: 1px; }
.e-arrow .ico { width: 13px; height: 13px; }
.e-item { width: 212px; margin-left: 12px; padding-bottom: 4px; }
.e-search { width: 44px; margin-left: 11px; }
.e-tag { width: 44px; margin-left: 3px; }
.edit-row .e-desc { width: 651px; margin-left: 9px; border: 2px solid #1a73e8; box-shadow: 0 0 3px #1a73e8; }
.selected { background: #3367d6; color: #fff; }
.e-gear { width: 53px; margin-left: 11px; }
.stepper { width: 164px; margin-left: 9px; display: flex; border: 1px solid #ddd; border-radius: 5px; background: #f8f9fa; color: #607d8b; }
.step-btn { width: 33px; display: flex; align-items: center; justify-content: center; font-size: 15px; }
.step-btn.plus { width: 38px; }
.step-val {
  flex: 1;
  display: flex;
  align-items: center;
  justify-content: center;
  background: #fff;
  font-size: 12.500px;
  box-shadow: 0 1px 2px rgba(0, 0, 0, .4);
  color: #666;
}
.e-price { width: 127px; margin-left: 18px; }
.e-small { width: 34px; margin-left: 10px; }
.e-small + .e-small { margin-left: 3px; }
.e-rebate { width: 72px; margin-left: 9px; }
.e-rebate + .e-small { width: 36px; }
.e-total { width: 127px; margin-left: 10px; }
.big-glyph { font-size: 21px; font-weight: 700; color: #546e7a; }

/* lower panels */
.lower {
  height: 107px;
  margin: 17px 0 0 4px;
  padding-top: 3px;
  border-top: 1px solid #f1f1f1;
  display: flex;
  flex-shrink: 0;
}
.actions {
  width: 600px;
  margin: 1px 0 0 5px;
  display: grid;
  grid-template-columns: repeat(12, 1fr);
  grid-auto-rows: 49.500px;
  row-gap: 2px;
}
.act { height: 100%; padding-top: 4px; font-size: 14.500px; border-radius: 7px; }
.act .ico { width: 19px; height: 19px; }
.green-t { color: #3c763d; }
.red-t { color: #b04a4a; }
.blue-t { color: #3f78b8; }
.pressed { background: #eceeef; }

.message { width: 601px; margin-left: 6px; }
.message-head { height: 26px; display: flex; justify-content: space-between; align-items: center; }
.message-head label { font-weight: 500; }
.msg-btn { width: 44px; height: 26px; }
.message-box {
  position: relative;
  height: 74px;
  padding: 9px 5px;
  border: 1px solid #e3e3e3;
  border-radius: 6px;
  box-shadow: 0 1px 3px rgba(0, 0, 0, .45);
  font-size: 12.500px;
  color: #666;
}
.message-box::after {
  content: "";
  position: absolute;
  right: 1px;
  bottom: 1px;
  width: 8px;
  height: 8px;
  background: linear-gradient(135deg, transparent 50%, #888 50%, #888 60%, transparent 60%, transparent 75%, #888 75%, #888 85%, transparent 85%);
}

.totals {
  width: 587px;
  margin-left: 14px;
  display: grid;
  grid-template-columns: 90px 90px 97px 91px 92px 92px;
  column-gap: 7px;
  grid-auto-rows: 27px;
}
.totals label { text-align: right; height: 27px; line-height: 24px; font-size: 13.500px; color: #444; }
.totals .field { height: 26px; font-weight: 500; }
.totals .currency { font-weight: 400; }
.totals .btn { height: 26px; }
.val-blue { color: #1976d2; }
.total-val { grid-column: span 2; }

/* bottom buttons */
.bottom-bar {
  height: 48px;
  margin: 13px 0 8px 10px;
  display: flex;
  gap: 5.800px;
  flex-shrink: 0;
}
.bottom-bar .btn { height: 48px; padding-top: 2px; border-radius: 5px; gap: 5px; }
.danger { width: 55.200px; flex: none; background: #f44336 !important; border-color: #f44336 !important; color: #fff !important; }
.ico-x { width: 15px; height: 15px; }
.bar {
  width: 97.500px;
  flex: none;
  font-size: 15px;
  color: #607d8b;
}
.bar svg { width: 20px; height: 20px; }
.bar svg.small { width: 11px; height: 11px; }
.bar.wide { width: 109px; margin-left: -1px; }
.amber-bg { background: #ffc107 !important; border-color: #ffc107 !important; color: #fff !important; }
.green-bg { background: #8bc34a !important; border-color: #8bc34a !important; color: #fff !important; }

/* tooltip and red tutorial marks */
.tooltip {
  position: absolute;
  left: 141px;
  top: 780px;
  width: 186px;
  height: 26px;
  background: rgba(3, 169, 244, .9);
  color: #fff;
  font-size: 13.300px;
  line-height: 26px;
  text-align: center;
  border-radius: 3px;
}
.tooltip::before {
  content: "";
  position: absolute;
  left: 86px;
  top: -5px;
  border: 5px solid transparent;
  border-bottom-color: #1ab0ef;
  border-top: 0;
}
.mark { position: absolute; }
.mark-rect-1 { left: 421px; top: 317px; width: 122px; height: 34px; border: 3px solid #f00; }
.mark-rect-2 { left: 157px; top: 723px; width: 157px; height: 55px; border: 5px solid #f00; }
.mark-circle {
  width: 58px;
  height: 58px;
  border: 4px solid #f00;
  border-radius: 50%;
  background: #fff;
  color: #000;
  font-family: "Liberation Sans", sans-serif;
  font-weight: 700;
  font-size: 40px;
  line-height: 50px;
  text-align: center;
}
.mark-circle-1 { left: 535px; top: 292px; }
.mark-circle-2 { left: 296px; top: 686px; }
```
